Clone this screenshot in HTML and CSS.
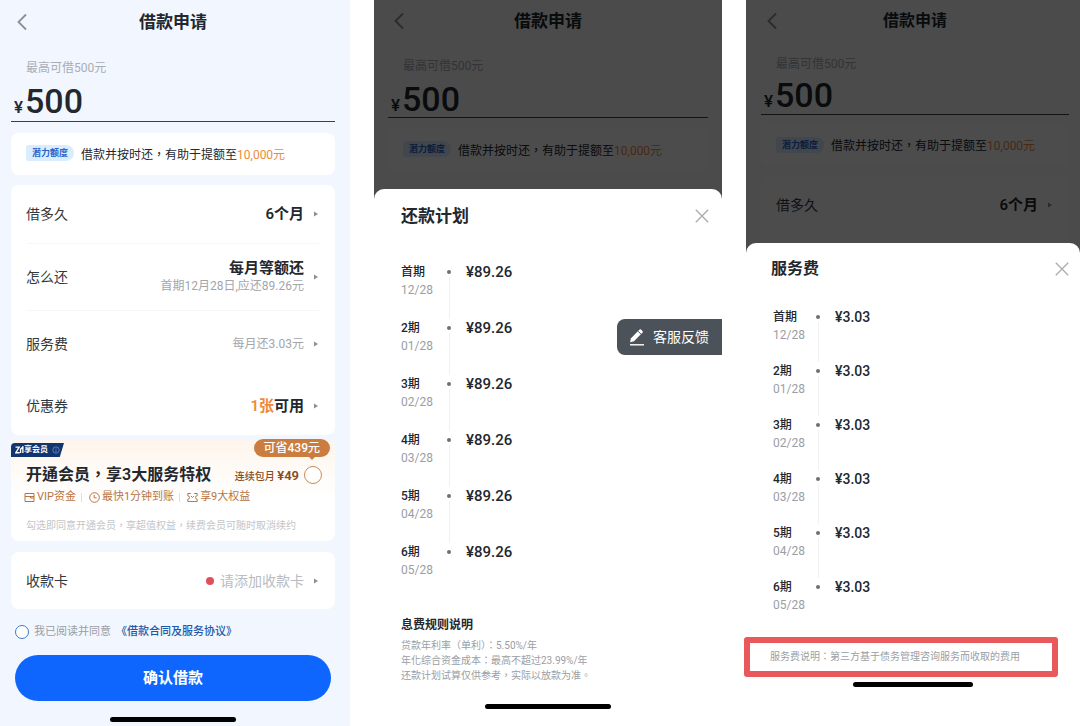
FILE: index.html
```html
<!DOCTYPE html>
<html lang="zh-Hant">
<head>
    <meta charset="UTF-8">
    <meta name="viewport" content="width=device-width, initial-scale=1.0">
    <title>借款申请</title>
    <link rel="stylesheet" href="styles.css">
</head>
<body>
    <svg class="sprite" aria-hidden="true">
        <symbol id="back" viewBox="0 0 12 18"><path d="M10 1.5 2.5 9l7.5 7.5" fill="none" stroke="currentColor" stroke-width="1.8"/></symbol>
        <symbol id="arrow" viewBox="0 0 4 6"><path d="M0 .5 4 3 0 5.5z" fill="currentColor"/></symbol>
        <symbol id="close" viewBox="0 0 14 14"><path d="M.8.8l12.4 12.4M13.2.8.8 13.2" fill="none" stroke="currentColor" stroke-width="1.3"/></symbol>
    </svg>

    <main class="screens">
        <!-- loan form -->
        <section class="phone phone-form">
            <header class="navbar">
                <button type="button" class="back" aria-label="返回"><svg><use href="#back"/></svg></button>
                <h1>借款申请</h1>
            </header>
            <label class="hint" for="amount">最高可借500元</label>
            <div class="amount">
                <span class="yen">¥</span>
                <input type="text" id="amount" value="500">
            </div>
            <div class="card tip">
                <span class="pill">潜力额度</span>
                <p>借款并按时还，有助于提额至<em>10,000元</em></p>
            </div>

            <div class="card rows">
                <button type="button" class="row">
                    <span class="name">借多久</span>
                    <span class="value">6个月</span>
                    <svg class="arrow"><use href="#arrow"/></svg>
                </button>
                <button type="button" class="row tall line">
                    <span class="name">怎么还</span>
                    <span class="value">每月等额还<small>首期12月28日,应还89.26元</small></span>
                    <svg class="arrow"><use href="#arrow"/></svg>
                </button>
                <button type="button" class="row tall line">
                    <span class="name">服务费</span>
                    <span class="value"><small>每月还3.03元</small></span>
                    <svg class="arrow"><use href="#arrow"/></svg>
                </button>
                <button type="button" class="row">
                    <span class="name">优惠券</span>
                    <span class="value"><em>1张</em>可用</span>
                    <svg class="arrow"><use href="#arrow"/></svg>
                </button>
            </div>

            <div class="card vip">
                <div class="vip-top">
                    <span class="vip-tag">
                        <svg class="vip-logo" viewBox="0 0 10 9"><path d="M.5 1.2h4.2L.8 7.6h4.4M6.2 7.9V3.6L8.8 1v6.9" fill="none" stroke="currentColor" stroke-width="1.5"/></svg>享会员
                        <svg class="vip-info" viewBox="0 0 10 10"><circle cx="5" cy="5" r="4" fill="none" stroke="currentColor"/><path d="M5 4.4v3M5 2.5v1" stroke="currentColor"/></svg>
                    </span>
                    <span class="save">可省439元</span>
                </div>
                <div class="vip-title">
                    <h2>开通会员，享3大服务特权</h2>
                    <label for="vip">连续包月 <b>¥49</b></label>
                    <input type="checkbox" id="vip" class="round">
                </div>
                <ul class="perks">
                    <li><svg viewBox="0 0 11 11"><path d="M1 1.5h9v8H1zM1 4.5h9M6.5 4.5v1.5H10" fill="none" stroke="currentColor"/></svg>VIP资金</li>
                    <li><svg viewBox="0 0 11 11"><circle cx="5.5" cy="5.5" r="4.8" fill="none" stroke="currentColor"/><path d="M5.2 2.8v3h2.4" fill="none" stroke="currentColor"/></svg>最快1分钟到账</li>
                    <li><svg viewBox="0 0 11 11"><path d="M3.8 1.5H.8v2.3a1.7 1.7 0 0 1 0 3.4v2.3h3M7.2 1.5h3v2.3a1.7 1.7 0 0 0 0 3.4v2.3h-3M3.8 9.5h3.4M4 4l1.5 1.5L7 4" fill="none" stroke="currentColor"/></svg>享9大权益</li>
                </ul>
                <p class="fine">勾选即同意开通会员，享超值权益，续费会员可随时取消续约</p>
            </div>

            <div class="card bank">
                <button type="button" class="row">
                    <span class="name">收款卡</span>
                    <span class="value empty">请添加收款卡</span>
                    <svg class="arrow"><use href="#arrow"/></svg>
                </button>
            </div>

            <div class="agree">
                <input type="checkbox" id="agree" class="round blue">
                <label for="agree">我已阅读并同意</label>
                <a href="#">《借款合同及服务协议》</a>
            </div>
            <button type="submit" class="submit">确认借款</button>
            <div class="home-bar"></div>
        </section>

        <!-- repayment plan sheet -->
        <section class="phone phone-plan">
            <div class="dimmed">
                <header class="navbar">
                    <button type="button" class="back" aria-label="返回"><svg><use href="#back"/></svg></button>
                    <h1>借款申请</h1>
                </header>
                <label class="hint" for="amount-plan">最高可借500元</label>
                <div class="amount">
                    <span class="yen">¥</span>
                    <input type="text" id="amount-plan" value="500">
                </div>
                <div class="card tip">
                    <span class="pill">潜力额度</span>
                    <p>借款并按时还，有助于提额至<em>10,000元</em></p>
                </div>
            </div>
            <div class="sheet">
                <div class="sheet-head">
                    <h2>还款计划</h2>
                    <button type="button" class="close" aria-label="关闭"><svg><use href="#close"/></svg></button>
                </div>
                <ol class="plan">
                    <li><div class="term">首期<time>12/28</time></div><i></i><b>¥89.26</b></li>
                    <li><div class="term">2期<time>01/28</time></div><i></i><b>¥89.26</b></li>
                    <li><div class="term">3期<time>02/28</time></div><i></i><b>¥89.26</b></li>
                    <li><div class="term">4期<time>03/28</time></div><i></i><b>¥89.26</b></li>
                    <li><div class="term">5期<time>04/28</time></div><i></i><b>¥89.26</b></li>
                    <li><div class="term">6期<time>05/28</time></div><i></i><b>¥89.26</b></li>
                </ol>
                <div class="rules">
                    <h3>息费规则说明</h3>
                    <p>贷款年利率（单利）：5.50%/年</p>
                    <p>年化综合资金成本：最高不超过23.99%/年</p>
                    <p>还款计划试算仅供参考，实际以放款为准。</p>
                </div>
                <div class="home-bar"></div>
                <button type="button" class="feedback">
                    <svg viewBox="0 0 16 18"><path d="M1 14.2l1-4L10.6 1.6a1 1 0 0 1 1.4 0l1.6 1.6a1 1 0 0 1 0 1.4L5 13.2z" fill="currentColor"/><path d="M9 3.2l3 3" stroke="#4b5259"/><path d="M1 16.8h14" stroke="currentColor" stroke-width="1.4"/></svg>客服反馈
                </button>
            </div>
        </section>

        <!-- service fee sheet -->
        <section class="phone phone-fee">
            <div class="dimmed">
                <header class="navbar">
                    <button type="button" class="back" aria-label="返回"><svg><use href="#back"/></svg></button>
                    <h1>借款申请</h1>
                </header>
                <label class="hint" for="amount-fee">最高可借500元</label>
                <div class="amount">
                    <span class="yen">¥</span>
                    <input type="text" id="amount-fee" value="500">
                </div>
                <div class="card tip">
                    <span class="pill">潜力额度</span>
                    <p>借款并按时还，有助于提额至<em>10,000元</em></p>
                </div>
                <div class="card rows">
                    <button type="button" class="row">
                        <span class="name">借多久</span>
                        <span class="value">6个月</span>
                        <svg class="arrow"><use href="#arrow"/></svg>
                    </button>
                </div>
            </div>
            <div class="sheet">
                <div class="sheet-head">
                    <h2>服务费</h2>
                    <button type="button" class="close" aria-label="关闭"><svg><use href="#close"/></svg></button>
                </div>
                <ol class="plan">
                    <li><div class="term">首期<time>12/28</time></div><i></i><b>¥3.03</b></li>
                    <li><div class="term">2期<time>01/28</time></div><i></i><b>¥3.03</b></li>
                    <li><div class="term">3期<time>02/28</time></div><i></i><b>¥3.03</b></li>
                    <li><div class="term">4期<time>03/28</time></div><i></i><b>¥3.03</b></li>
                    <li><div class="term">5期<time>04/28</time></div><i></i><b>¥3.03</b></li>
                    <li><div class="term">6期<time>05/28</time></div><i></i><b>¥3.03</b></li>
                </ol>
                <p class="notice">服务费说明：第三方基于债务管理咨询服务而收取的费用</p>
                <div class="home-bar"></div>
            </div>
        </section>
    </main>
</body>
</html>
```

FILE: styles.css
```css
* {
  box-sizing: border-box;
}

body {
  margin: 0;
  background: #fff;
  color: #23272e;
  font-family: Roboto, "Noto Sans CJK TC", "Noto Sans CJK SC", sans-serif;
  font-size: 14px;
}

h1, h2, h3, p, ul, ol {
  margin: 0;
  padding: 0;
  list-style: none;
}

button, input {
  font: inherit;
  color: inherit;
  border: none;
  background: none;
  padding: 0;
  margin: 0;
}

button {
  cursor: pointer;
}

em {
  font-style: normal;
  color: #f08a3a;
}

.sprite {
  display: none;
}

.screens {
  display: grid;
  grid-template-columns: 350fr 348fr 334fr;
  gap: 24px;
  min-height: 100vh;
}

.phone {
  display: flex;
  flex-direction: column;
  min-width: 0;
}

.phone-form {
  background: #f2f6fe;
  padding: 0 15px 0 11px;
}

/* top part */
.navbar {
  display: grid;
  grid-template-columns: 24px 1fr 24px;
  align-items: center;
  height: 44px;
}

.navbar h1 {
  font-size: 17px;
  line-height: 24px;
  font-weight: 600;
  text-align: center;
}

.back {
  display: flex;
  padding-left: 5px;
  color: #8b8f96;
}

.back svg {
  width: 12px;
  height: 18px;
}

.hint {
  padding: 15px 15px 0;
  font-size: 12px;
  line-height: 18px;
  color: #a9adb5;
}

.amount {
  display: flex;
  align-items: baseline;
  gap: 2px;
  height: 45px;
  padding: 4px 3px 0;
  border-bottom: 1px solid #3c4048;
}

.yen {
  font-size: 17px;
  font-weight: 500;
}

.amount input {
  flex: 1;
  min-width: 0;
  font-size: 34px;
  line-height: 40px;
  height: 40px;
  font-weight: 500;
}

.card {
  background: #fff;
  border-radius: 8px;
}

.tip {
  display: flex;
  align-items: center;
  gap: 7px;
  height: 42px;
  margin-top: 11px;
  padding: 0 15px 2px;
  font-size: 12px;
  white-space: nowrap;
}

.pill {
  padding: 0 6px;
  border-radius: 3px 9px 9px 3px;
  background: #d9edff;
  color: #2b64c8;
  font-size: 9px;
  line-height: 16px;
  font-weight: 600;
}

/* rows */
.rows {
  margin-top: 10px;
}

.row {
  display: flex;
  align-items: center;
  gap: 10px;
  width: 100%;
  height: 58px;
  padding: 0 17px 0 15px;
}

.tall {
  height: 67px;
}

.line {
  background: linear-gradient(#f5f6f8, #f5f6f8) center top / 292px 1px no-repeat;
}

.name {
  flex: 1;
  line-height: 18px;
  text-align: left;
  color: #33373e;
}

.value {
  font-size: 15px;
  line-height: 18px;
  font-weight: 600;
  text-align: right;
}

.value small {
  display: block;
  font-size: 12px;
  font-weight: 400;
  color: #a3a6ab;
}

.value.empty {
  display: flex;
  align-items: center;
  gap: 6px;
  font-size: 14px;
  font-weight: 400;
  color: #b9bcc2;
}

.empty::before {
  content: "";
  width: 8px;
  height: 8px;
  border-radius: 50%;
  background: #e0505c;
}

.arrow {
  width: 4px;
  height: 6px;
  color: #8b8f96;
}

/* vip card */
.vip {
  margin-top: 4px;
  padding-bottom: 7px;
  background: linear-gradient(#fdf5ec, #fff 60%);
}

.vip-top {
  display: flex;
  justify-content: space-between;
  align-items: flex-end;
  padding-right: 5px;
}

.vip-tag {
  display: flex;
  align-items: center;
  padding: 0 4px;
  background: #12346f;
  color: #fff;
  font-size: 8px;
  line-height: 14px;
  font-weight: 600;
  border-radius: 4px 0 0 0;
  clip-path: polygon(0 0, 100% 0, 92% 100%, 0 100%);
}

.vip-logo {
  width: 9px;
  height: 8px;
}

.vip-info {
  width: 8px;
  height: 8px;
  margin-left: 4px;
  color: #6d8fc9;
}

.save {
  position: relative;
  padding: 0 10px;
  border-radius: 9px;
  background: #cb7d40;
  color: #fff;
  font-size: 12px;
  line-height: 18px;
  font-weight: 500;
}

.save::after {
  content: "";
  position: absolute;
  top: 18px;
  right: 15px;
  border: 3px solid transparent;
  border-top-color: #cb7d40;
  border-bottom: none;
}

.vip-title {
  display: flex;
  align-items: center;
  padding: 6px 13px 0 15px;
  white-space: nowrap;
}

.vip-title h2 {
  flex: 1;
  font-size: 16px;
  line-height: 24px;
  font-weight: 600;
}

.vip-title label {
  margin-right: 5px;
  font-size: 10px;
  font-weight: 500;
  color: #8a4a1c;
}

.vip-title b {
  font-size: 13px;
  font-weight: 600;
}

.round {
  appearance: none;
  width: 18px;
  height: 18px;
  border: 1px solid #c98a55;
  border-radius: 50%;
  background: #fff;
}

.perks {
  display: flex;
  padding: 2px 13px 0;
  font-size: 11px;
  line-height: 16px;
  color: #b9743f;
  white-space: nowrap;
}

.perks li {
  display: flex;
  align-items: center;
  gap: 2px;
}

.perks li + li::before {
  content: "";
  width: 1px;
  height: 9px;
  margin: 0 5px;
  background: #ecdccd;
}

.perks svg {
  width: 11px;
  height: 11px;
}

.fine {
  padding: 13px 15px 0;
  font-size: 10px;
  line-height: 16px;
  color: #c3c5c9;
  white-space: nowrap;
}

.bank {
  margin-top: 11px;
}

.bank .row {
  height: 57px;
}

.agree {
  display: flex;
  align-items: center;
  gap: 5px;
  margin: 15px 4px 0;
  font-size: 11px;
  line-height: 16px;
  color: #9a9ea6;
  white-space: nowrap;
}

.agree a {
  color: #1f57a8;
  font-weight: 500;
  text-decoration: none;
}

.blue {
  width: 14px;
  height: 14px;
  border-color: #3a7bc8;
}

.submit {
  height: 46px;
  margin: 15px 4px 0;
  border-radius: 23px;
  background: #0f66ff;
  color: #fff;
  font-size: 15px;
  line-height: 18px;
  font-weight: 600;
}

.home-bar {
  width: 126px;
  height: 5px;
  margin: 16px auto 0;
  border-radius: 3px;
  background: #000;
}

/* page behind an open sheet */
.dimmed {
  position: relative;
  padding: 0 14px 28px;
  background: #fafbfd;
}

.dimmed::after {
  content: "";
  position: absolute;
  inset: 0;
  background: rgba(0, 0, 0, 0.7);
}

.dimmed .hint {
  display: block;
}

.phone-plan .navbar {
  height: 42px;
}

.phone-plan .amount {
  height: 43px;
}

.sheet {
  position: relative;
  flex: 1;
  margin-top: -10px;
  padding: 0 27px;
  border-radius: 10px 10px 0 0;
  background: #fff;
}

.sheet-head {
  display: flex;
  justify-content: space-between;
  align-items: center;
  height: 54px;
}

.sheet-head h2 {
  font-size: 17px;
  line-height: 24px;
  font-weight: 600;
}

.close {
  display: flex;
  margin-right: -14px;
  color: #a8abb0;
}

.close svg {
  width: 14px;
  height: 14px;
}

/* instalment timeline */
.plan {
  padding-top: 20px;
}

.plan li {
  display: grid;
  grid-template-columns: 46px 4px 1fr;
  height: 56px;
}

.term {
  font-size: 12px;
  line-height: 18px;
  font-weight: 500;
}

.term time {
  display: block;
  font-weight: 400;
  color: #9b9ea4;
}

.plan i {
  display: flex;
  flex-direction: column;
  align-items: center;
  gap: 3px;
  padding-top: 7px;
}

.plan i::before {
  content: "";
  width: 4px;
  height: 4px;
  border-radius: 50%;
  background: #6c7077;
}

.plan i::after {
  content: "";
  flex: 1;
  width: 1px;
  background: #f0f1f3;
}

.plan li:last-child i::after {
  display: none;
}

.plan b {
  padding-left: 15px;
  font-size: 15px;
  line-height: 18px;
  font-weight: 500;
}

.rules {
  padding-top: 17px;
  font-size: 10px;
  line-height: 15px;
  color: #9b9ea4;
}

.rules h3 {
  margin-bottom: 4px;
  color: #23272e;
  font-size: 12px;
  line-height: 18px;
  font-weight: 600;
}

.phone-plan .home-bar {
  margin-top: 21px;
}

.feedback {
  position: absolute;
  top: 130px;
  right: 0;
  display: flex;
  align-items: center;
  gap: 8px;
  height: 36px;
  padding: 0 13px 0 12px;
  border-radius: 8px 0 0 8px;
  background: #4b5259;
  color: #fff;
  line-height: 18px;
}

.feedback svg {
  width: 16px;
  height: 18px;
}

/* fee screen is a little denser */
.phone-fee .navbar {
  height: 41px;
}

.phone-fee .navbar h1,
.phone-fee .sheet-head h2 {
  font-size: 16px;
}

.phone-fee .dimmed {
  padding: 0 11px 0 15px;
}

.phone-fee .hint {
  padding-top: 14px;
}

.phone-fee .amount {
  height: 42px;
  padding-top: 2px;
}

.phone-fee .tip {
  height: 41px;
  margin-top: 10px;
}

.phone-fee .rows {
  padding-bottom: 19px;
  border-radius: 8px 8px 0 0;
}

.phone-fee .sheet {
  padding: 0 25px;
}

.phone-fee .sheet-head {
  height: 52px;
}

.phone-fee .plan {
  padding: 13px 2px 0;
}

.phone-fee .plan li {
  grid-template-columns: 43px 4px 1fr;
  height: 54px;
}

.phone-fee .plan b {
  font-size: 14px;
}

.phone-fee .notice {
  margin: 5px -3px 0 -27px;
  padding: 6px 20px;
  border: 6px solid #e9595c;
  border-radius: 3px;
  color: #9b9ea4;
  font-size: 10px;
  line-height: 16px;
}

.phone-fee .home-bar {
  width: 120px;
  margin-top: 5px;
}
```
